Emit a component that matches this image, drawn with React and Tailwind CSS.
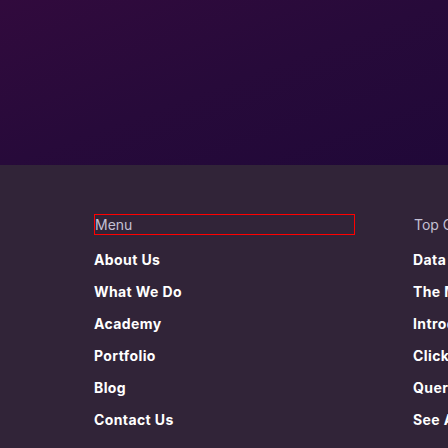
const menuLinks = ['About Us', 'What We Do', 'Academy', 'Portfolio', 'Blog', 'Contact Us'];
const topLinks = ['Data Science Course', 'The Marketing Blueprint', 'Introduction to Python', 'Click Funnels Mastery', 'Query Optimization', 'See All Courses'];

const FooterColumn = ({ title, links, boxed, width }) => (
    <div className={`flex flex-col shrink-0 ${width}`}>
        <div className={`h-[21px] text-[14px] leading-[19px] text-[#c4c0d4] whitespace-nowrap ${boxed ? 'border border-[#ff0000]' : 'border border-transparent'}`}>
            {title}
        </div>
        <ul className="mt-[15px] flex flex-col gap-[12px]">
            {links.map((link) => (
                <li key={link} className="text-[14px] leading-[20px] font-bold tracking-[0.4px] text-white whitespace-nowrap">
                    {link}
                </li>
            ))}
        </ul>
    </div>
);

export default function App() {
    return (
        <div className="w-[448px] h-[448px] overflow-hidden bg-[#312438]" style={{ fontFamily: 'Inter, "Open Sans", sans-serif' }}>
            {/* Hero band */}
            <div className="h-[165px] bg-linear-to-br from-[#310a3d] via-[#270a3a] to-[#200838]" />

            {/* Footer */}
            <footer className="pt-[49px] pl-[94px] flex gap-[58px]">
                <FooterColumn title="Menu" links={menuLinks} boxed width="w-[261px]" />
                <FooterColumn title="Top Courses" links={topLinks} width="w-[200px]" />
            </footer>
        </div>
    );
}
